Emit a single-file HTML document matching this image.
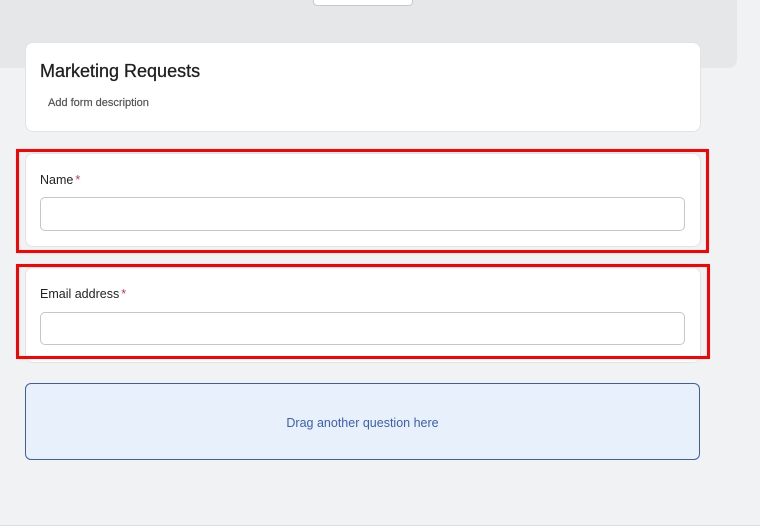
<!DOCTYPE html>
<html><head><style>
*{box-sizing:border-box;margin:0;padding:0}
body{width:760px;height:529px;background:#f1f2f4;position:relative;overflow:hidden;font-family:"Liberation Sans",sans-serif}
div{position:absolute}
.band{left:0;top:0;width:737px;height:68px;background:#e6e7e9;border-bottom-right-radius:8px}
.tab{left:313px;top:-4px;width:100px;height:10px;background:#fff;border:1px solid #c8c9cc;border-radius:4px}
.card{background:#fff;border:1px solid #e2e3e5;border-radius:8px;left:25px;width:676px}
.red{border:3px solid #ff0000;left:16px}
.inp{left:40px;width:645px;height:34px;border:1px solid #c5c6c9;border-radius:5px;background:#fff}
.lbl{left:40px;font-size:12.5px;color:#222}
.lbl span{color:#c0394b;margin-left:2px}
</style></head><body>
<div class="band"></div>
<div class="tab"></div>
<div class="card" style="top:42px;height:90px"></div>
<div style="left:40px;top:61px;font-size:18px;color:#1f1f1f;-webkit-text-stroke:0.3px #1f1f1f">Marketing Requests</div>
<div style="left:48px;top:97px;font-size:11px;color:#555;-webkit-text-stroke:0.2px #555">Add form description</div>
<div class="card" style="top:153px;height:94px"></div>
<div class="red" style="top:149px;width:693px;height:104px"></div>
<div class="lbl" style="top:173px">Name<span>*</span></div>
<div class="inp" style="top:197px"></div>
<div class="card" style="top:267px;height:96px"></div>
<div class="red" style="top:264px;width:694px;height:95px"></div>
<div class="lbl" style="top:287px">Email address<span>*</span></div>
<div class="inp" style="top:312px;height:33px"></div>
<div style="left:25px;top:383px;width:675px;height:77px;background:#e8f0fc;border:1px solid #3e5fa8;border-radius:6px;display:flex;align-items:center;justify-content:center;font-size:12.5px;color:#3a60b5;padding-top:2px">Drag another question here</div>
<div style="left:0;top:525px;width:760px;height:4px;background:#fff;border-top:1px solid #ddd"></div>
</body></html>
